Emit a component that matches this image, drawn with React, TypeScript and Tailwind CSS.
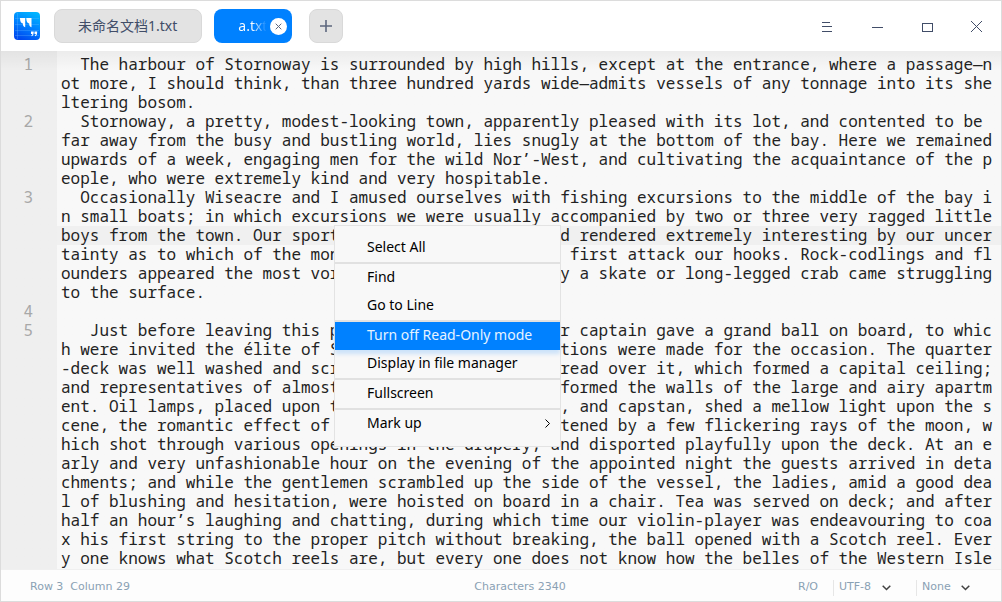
import { ReactNode } from "react";

type Paragraph = { text: string; current?: boolean };

const paragraphs: Paragraph[] = [
  {
    text: "  The harbour of Stornoway is surrounded by high hills, except at the entrance, where a passage—not more, I should think, than three hundred yards wide—admits vessels of any tonnage into its sheltering bosom.",
  },
  {
    text: "  Stornoway, a pretty, modest-looking town, apparently pleased with its lot, and contented to be far away from the busy and bustling world, lies snugly at the bottom of the bay. Here we remained upwards of a week, engaging men for the wild Nor’-West, and cultivating the acquaintance of the people, who were extremely kind and very hospitable.",
  },
  {
    current: true,
    text: "  Occasionally Wiseacre and I amused ourselves with fishing excursions to the middle of the bay in small boats; in which excursions we were usually accompanied by two or three very ragged little boys from the town. Our sport was really capital, and rendered extremely interesting by our uncertainty as to which of the monsters of the deep would first attack our hooks. Rock-codlings and flounders appeared the most voracious; but occasionally a skate or long-legged crab came struggling to the surface.",
  },
  { text: "" },
  {
    text: "   Just before leaving this place for the Faroes, our captain gave a grand ball on board, to which were invited the élite of Stornoway. Great preparations were made for the occasion. The quarter-deck was well washed and scrubbed; an awning was spread over it, which formed a capital ceiling; and representatives of almost every nation on earth formed the walls of the large and airy apartment. Oil lamps, placed upon the skylights, companion, and capstan, shed a mellow light upon the scene, the romantic effect of which was greatly heightened by a few flickering rays of the moon, which shot through various openings in the drapery, and disported playfully upon the deck. At an early and very unfashionable hour on the evening of the appointed night the guests arrived in detachments; and while the gentlemen scrambled up the side of the vessel, the ladies, amid a good deal of blushing and hesitation, were hoisted on board in a chair. Tea was served on deck; and after half an hour’s laughing and chatting, during which time our violin-player was endeavouring to coax his first string to the proper pitch without breaking, the ball opened with a Scotch reel. Every one knows what Scotch reels are, but every one does not know how the belles of the Western Isle",
  },
];

function Logo() {
  return (
    <svg width="26" height="28" viewBox="0 0 26 28" aria-hidden="true">
      <defs>
        <linearGradient id="logo" x1="0.7" y1="0" x2="0.3" y2="1">
          <stop offset="0" stopColor="#00b4ff" />
          <stop offset="0.5" stopColor="#0080ff" />
          <stop offset="1" stopColor="#0048ee" />
        </linearGradient>
      </defs>
      <rect width="26" height="28" rx="4" fill="url(#logo)" />
      <path d="M3.500 1v26M1 6.500h24M1 12.500h24M1 18.500h24M1 23.500h24" stroke="#7cc8ff" strokeOpacity="0.25" />
      <path d="M6 6h5.200v9.300c-1.700-.3-2.300-1.400-2.300-3.700C7 11.300 6 9.600 6 6zM12.300 6h5.200v9.300c-1.700-.3-2.300-1.400-2.300-3.700-1.900-.3-2.900-2-2.900-5.600z" fill="#fff" />
      <path d="M17 19.500h2.700c0 2.800-.5 4.200-2.200 4.700v-1c.6-.3.800-.6.800-1.300H17zM20.500 19.500h2.700c0 2.800-.5 4.200-2.200 4.700v-1c.6-.3.800-.6.800-1.300h-1.300z" fill="#fff" />
    </svg>
  );
}

function WindowButton({ label, children }: { label: string; children: ReactNode }) {
  return (
    <button type="button" aria-label={label} className="flex h-full w-[50px] items-center justify-center text-[#414d68]">
      <svg width="14" height="14" viewBox="0 0 14 14" fill="none" stroke="currentColor" shapeRendering="crispEdges">
        {children}
      </svg>
    </button>
  );
}

function TitleBar() {
  return (
    <header className="flex h-[50px] shrink-0 items-center bg-white pl-[13px] font-['Noto_Sans','Noto_Sans_CJK_SC',sans-serif] text-sm">
      <Logo />
      <button type="button" className="ml-[14px] h-[34px] rounded-lg border border-[#d9d9d9] bg-[#e3e3e3] pl-[23px] pr-6 text-[#414d68]">
        未命名文档1.txt
      </button>
      <div className="ml-3 flex h-[34px] w-[78px] items-center rounded-lg bg-[#0081ff] pl-6 pr-[5px]">
        <button type="button" className="w-7 overflow-hidden bg-linear-to-r from-white from-50% to-white/5 bg-clip-text text-left text-transparent">
          a.txt
        </button>
        <button type="button" aria-label="Close a.txt" className="ml-auto flex size-[17px] shrink-0 items-center justify-center rounded-full bg-white text-[#5d677e]">
          <svg width="7" height="7" viewBox="0 0 7 7" stroke="currentColor">
            <path d="M.7.7l5.600 5.600M6.300.7L.7 6.300" />
          </svg>
        </button>
      </div>
      <button type="button" aria-label="New tab" className="ml-[17px] flex size-[34px] items-center justify-center rounded-lg border border-[#d9d9d9] bg-[#e3e3e3] text-[#5d677e]">
        <svg width="12" height="12" viewBox="0 0 12 12" fill="currentColor">
          <path d="M5.200 0h1.600v12H5.200zM0 5.200h12v1.600H0z" />
        </svg>
      </button>
      <nav className="ml-auto flex h-full">
        <WindowButton label="Menu">
          <path d="M3 3.500h8M3 7.500h10M3 12.500h10" />
        </WindowButton>
        <WindowButton label="Minimize">
          <path d="M3 8.500h11" />
        </WindowButton>
        <WindowButton label="Maximize">
          <path d="M3.500 4.500h10v8h-10z" />
        </WindowButton>
        <WindowButton label="Close">
          <path d="M2 2l11 11M13 2l-11 11" />
        </WindowButton>
      </nav>
    </header>
  );
}

function Editor() {
  return (
    <main className="relative flex min-h-0 flex-1 flex-col overflow-hidden bg-[#f8f8f8] bg-linear-to-r from-[#efefef] from-[56px] to-[#f8f8f8] to-[56px] pt-1 font-['Noto_Sans_Mono','Droid_Sans_Mono','DejaVu_Sans_Mono',monospace] text-base leading-[19px] text-[#222]">
      {paragraphs.map((p, i) => (
        <div key={i} className="flex shrink-0">
          <span className="w-14 shrink-0 pr-6 text-right text-[#a8a8a8]">{i + 1}</span>
          <p
            className={`min-w-0 flex-1 whitespace-pre-wrap pl-1 pr-1 [line-break:anywhere] ${
              p.current ? "bg-[linear-gradient(#f0f0f0,#f0f0f0)] bg-[length:100%_19px] bg-[position:0_38px] bg-no-repeat" : ""
            }`}
          >
            {p.text}
          </p>
        </div>
      ))}
      <div className="pointer-events-none absolute inset-x-0 top-0 h-5 bg-linear-to-b from-black/5 to-transparent" />
    </main>
  );
}

function MenuItem({ children, active, submenu }: { children: ReactNode; active?: boolean; submenu?: boolean }) {
  return (
    <li role="none">
      <button
        type="button"
        role="menuitem"
        className={`flex h-7 w-full items-center justify-between pb-0.5 pl-8 pr-[9px] text-left ${
          active ? "relative bg-[#0081ff] text-[#e6f3ff] shadow-[0_4px_4px_rgba(0,129,255,0.18)]" : ""
        }`}
      >
        {children}
        {submenu && (
          <svg width="6" height="9" viewBox="0 0 6 9" fill="none" stroke="currentColor">
            <path d="M.5.5l4 4-4 4" />
          </svg>
        )}
      </button>
    </li>
  );
}

function Separator() {
  return <li role="separator" className="h-0.5 bg-[#e1e1e1]" />;
}

function ContextMenu() {
  return (
    <ul
      role="menu"
      className="absolute left-[333px] top-[224px] w-[227px] border border-[#e3e3e3] bg-[#f8f8f8] py-2 font-['Noto_Sans',sans-serif] text-sm text-black"
    >
      <MenuItem>Select All</MenuItem>
      <Separator />
      <MenuItem>Find</MenuItem>
      <MenuItem>Go to Line</MenuItem>
      <Separator />
      <MenuItem active>Turn off Read-Only mode</MenuItem>
      <MenuItem>Display in file manager</MenuItem>
      <Separator />
      <MenuItem>Fullscreen</MenuItem>
      <Separator />
      <MenuItem submenu>Mark up</MenuItem>
    </ul>
  );
}

function StatusSelect({ label, value, width }: { label: string; value: string; width: string }) {
  return (
    <div className="flex h-4 items-center border-l border-[#e6e6e6] pl-[5px]">
      <select aria-label={label} defaultValue={value} className={`appearance-none bg-transparent ${width}`}>
        <option>{value}</option>
      </select>
      <svg width="9" height="6" viewBox="0 0 9 6" fill="none" stroke="#414141" strokeWidth="1.5" aria-hidden="true">
        <path d="M.7.7l3.800 3.800L8.300.7" />
      </svg>
    </div>
  );
}

function StatusBar() {
  return (
    <footer className="grid h-8 shrink-0 grid-cols-[1fr_auto_1fr] items-center border-t border-[#f0f0f0] bg-[#fdfdfd] pl-[29px] pr-[31px] pt-1 font-['DejaVu_Sans',sans-serif] text-[11px] text-[#8aa1b4]">
      <span className="whitespace-pre">Row 3  Column 29</span>
      <span className="pl-10">Characters 2340</span>
      <div className="flex items-center justify-end">
        <span className="mr-[15px]">R/O</span>
        <StatusSelect label="Encoding" value="UTF-8" width="w-[43px]" />
        <span className="w-[25px]" />
        <StatusSelect label="Highlighting" value="None" width="w-[39px]" />
      </div>
    </footer>
  );
}

export default function App() {
  return (
    <div className="relative flex h-screen flex-col overflow-hidden border border-[#dcdcdc] bg-white">
      <TitleBar />
      <Editor />
      <StatusBar />
      <ContextMenu />
    </div>
  );
}
